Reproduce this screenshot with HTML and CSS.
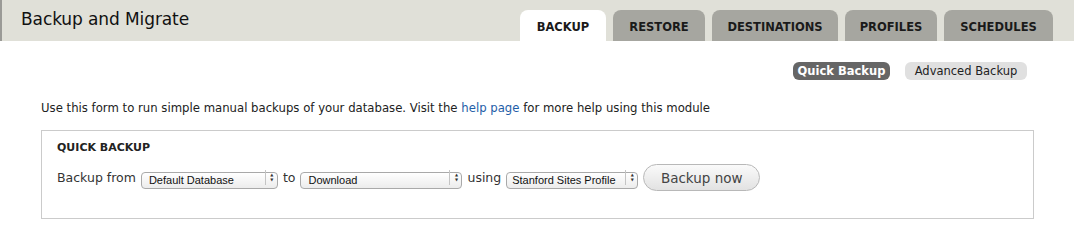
FILE: index.html
```html
<!DOCTYPE html>
<html>
<head>
<meta charset="utf-8">
<link rel="stylesheet" href="styles.css">
</head>
<body>
<header class="header">
  <h1 class="title">Backup and Migrate</h1>
  <nav class="tabs">
    <a class="tab active">BACKUP</a>
    <a class="tab tab-restore">RESTORE</a>
    <a class="tab tab-dest">DESTINATIONS</a>
    <a class="tab tab-prof">PROFILES</a>
    <a class="tab tab-sched">SCHEDULES</a>
  </nav>
</header>
<main class="content">
  <div class="subtabs">
    <a class="pill pill-quick active">Quick Backup</a>
    <a class="pill pill-adv">Advanced Backup</a>
  </div>
  <p class="desc">Use this form to run simple manual backups of your database. Visit the <a class="link">help page</a> for more help using this module</p>
  <section class="fieldset">
    <h2 class="legend">QUICK BACKUP</h2>
    <div class="row">
      <span class="lbl">Backup from</span>
      <span class="sel sel-src"><select><option>Default Database</option></select><span class="arrow">&#9650;<br>&#9660;</span></span>
      <span class="lbl">to</span>
      <span class="sel sel-dest"><select><option>Download</option></select><span class="arrow">&#9650;<br>&#9660;</span></span>
      <span class="lbl">using</span>
      <span class="sel sel-prof"><select><option>Stanford Sites Profile</option></select><span class="arrow">&#9650;<br>&#9660;</span></span>
      <button class="btn">Backup now</button>
    </div>
  </section>
</main>
</body>
</html>
```
FILE: styles.css
```css
html, body {
  margin: 0;
  padding: 0;
  background: #fff;
  font-family: "DejaVu Sans", Verdana, sans-serif;
  color: #222;
}
.header {
  height: 41px;
  background: #e0e0d8;
  border-left: 2px solid #9a9a96;
  box-sizing: border-box;
  display: flex;
  justify-content: space-between;
  align-items: flex-end;
  padding: 0 21px 0 19px;
}
.title {
  margin: 0;
  align-self: flex-start;
  padding-top: 9px;
  font-size: 17px;
  font-weight: normal;
  color: #111;
  letter-spacing: -0.1px;
}
.tabs {
  display: flex;
  gap: 7px;
}
.tab {
  display: flex;
  align-items: center;
  justify-content: center;
  height: 31px;
  box-sizing: border-box;
  padding-top: 2px;
  background: #a6a6a0;
  border-radius: 8px 8px 0 0;
  font-size: 11.5px;
  font-weight: bold;
  color: #1a1a1a;
}
.tab.active { background: #fff; width: 86px; }
.tab-restore { width: 92px; }
.tab-dest { width: 126px; }
.tab-prof { width: 92px; }
.tab-sched { width: 109px; }
.content {
  padding: 21px 40px 0 41px;
}
.subtabs {
  display: flex;
  justify-content: flex-end;
  gap: 15px;
  padding-right: 7px;
}
.pill {
  height: 18px;
  line-height: 18px;
  text-align: center;
  border-radius: 6px;
  background: #e0e0e0;
  font-size: 11.5px;
  color: #222;
}
.pill-quick { width: 97px; }
.pill-adv { width: 122px; }
.pill.active {
  background: #666;
  color: #fff;
  font-weight: bold;
}
.desc {
  margin: 19px 0 0;
  font-size: 11.7px;
  line-height: 18px;
  color: #222;
}
.link { color: #1f5ea8; }
.fieldset {
  margin-top: 13px;
  border: 1px solid #cbcbcb;
  height: 89px;
  box-sizing: border-box;
  padding: 9px 15px 0;
}
.legend {
  margin: 0;
  font-size: 11px;
  font-weight: bold;
  color: #222;
  line-height: 16px;
}
.row {
  display: flex;
  align-items: center;
  margin-top: 8px;
  gap: 5px;
}
.lbl {
  font-size: 12.5px;
  color: #333;
}
.sel {
  position: relative;
  display: inline-block;
  height: 17px;
}
.sel select {
  appearance: none;
  -webkit-appearance: none;
  height: 17px;
  box-sizing: border-box;
  border: 1px solid #a9a9a9;
  border-radius: 4px;
  background: linear-gradient(#ffffff, #ececec);
  font-family: "Liberation Sans", Arial, sans-serif;
  font-size: 11px;
  color: #111;
  padding: 0 0 0 7px;
  margin: 0;
}
.sel-src select { width: 137px; }
.sel-dest select { width: 162px; }
.sel-prof select { width: 132px; padding-left: 5px; }
.arrow {
  position: absolute;
  right: 0;
  top: 1px;
  bottom: 1px;
  width: 13px;
  border-left: 1px solid #c4c4c4;
  font-size: 4px;
  line-height: 5px;
  color: #333;
  text-align: center;
  padding-top: 2px;
  box-sizing: border-box;
  pointer-events: none;
}
.btn {
  width: 117px;
  height: 27px;
  border: 1px solid #b8b8b8;
  border-radius: 14px;
  background: linear-gradient(#fafafa, #e2e2e2);
  font-family: "DejaVu Sans", Verdana, sans-serif;
  font-size: 13.5px;
  color: #444;
  padding: 0;
  margin-left: 0;
}
```
